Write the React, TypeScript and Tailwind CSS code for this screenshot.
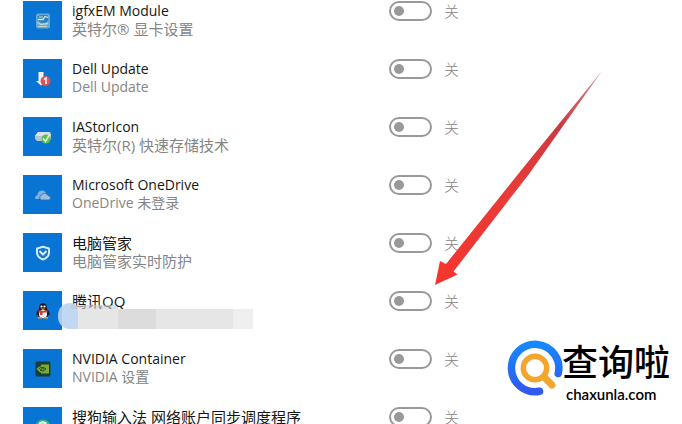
import { useState } from 'react'
import type { ReactNode } from 'react'
import { clsx } from 'clsx'

interface StartupApp {
  id: string
  name: string
  detail: string
  icon: ReactNode
  masked?: boolean
}

function GraphicsIcon() {
  return (
    <svg viewBox="0 0 16 16" className="size-4" aria-hidden="true">
      <rect x="1" y="0.5" width="14" height="15" rx="2" fill="#62abd8" />
      <path d="M2.5 3.5 6 2h6.500l1 5-2.500 2.500L7 10 3 8z" fill="#2c80c0" />
      <path d="M3 6.500h5l2-3 3 1" stroke="#d6e6e4" strokeWidth="1.300" fill="none" />
      <path d="M4 4h4" stroke="#d9c98c" strokeWidth="1.200" />
      <path d="M2.500 9.500 6 11.500l7-1" stroke="#b7d7e2" strokeWidth="1.300" fill="none" />
      <path d="M3 13.500h9" stroke="#c8d6c0" strokeWidth="1" />
    </svg>
  )
}

function DellIcon() {
  return (
    <svg viewBox="0 0 16 16" className="size-4" aria-hidden="true">
      <path d="M3.500 1h5v9h2L6 14.500 1 10h2.500z" fill="#f3f5fa" />
      <circle cx="10.500" cy="10" r="5" fill="#dc5454" />
      <path d="m9 8.500 2-1.500v6" stroke="#fff" strokeWidth="1.500" fill="none" />
    </svg>
  )
}

function StorageIcon() {
  return (
    <svg viewBox="0 0 16 16" className="size-4" aria-hidden="true">
      <path d="M3 3h12l1 2v5l-2 2H2l-2-2V7z" fill="#b9c4cf" />
      <path d="M3 3h12l-2 4H0z" fill="#dce2e8" />
      <circle cx="11" cy="10" r="4.500" fill="#58bd58" />
      <path d="m8 9.500 2.500 3L15 5" stroke="#d5f6bd" strokeWidth="1.700" fill="none" />
    </svg>
  )
}

function CloudIcon() {
  return (
    <svg viewBox="0 0 16 16" className="size-4" aria-hidden="true">
      <path d="M0 11a3 3 0 0 1 2.500-3A4.500 4.500 0 0 1 11 6L6 8l-2 4H1z" fill="#7fb0df" />
      <path
        d="M6.500 13a2.500 2.500 0 0 1-.5-4.500 4 4 0 0 1 7.200.2 2.200 2.200 0 0 1 .8 4.300z"
        fill="#9dbcd8"
        stroke="#1873cd"
        strokeWidth="0.800"
      />
    </svg>
  )
}

function ShieldIcon() {
  return (
    <svg viewBox="0 0 16 16" className="size-4" aria-hidden="true">
      <path
        d="M8 1.800 14 3.500v4c0 3.200-2.500 5.700-6 7-3.500-1.300-6-3.800-6-7v-4z"
        fill="#1674cf"
        stroke="#d3ebff"
        strokeWidth="2"
        strokeLinejoin="round"
      />
      <path d="m4.500 6 3.500 3.500L11.500 6" fill="none" stroke="#d3ebff" strokeWidth="2" />
    </svg>
  )
}

function PenguinIcon() {
  return (
    <svg viewBox="0 0 16 16" className="size-4" aria-hidden="true">
      <path d="M4 6C4 2 5.500.3 8 .3S12 2 12 6c2 2 3 4 2.500 6.500L13 12l-1 3H4l-1-3-1.500.5C1 10 2 8 4 6z" fill="#1c1b24" />
      <ellipse cx="8" cy="11" rx="4" ry="4" fill="#f6f4f0" />
      <circle cx="6.500" cy="3.500" r="1.100" fill="#fff" />
      <circle cx="9.500" cy="3.500" r="1.100" fill="#fff" />
      <path d="M5.500 5.500h5L8 7z" fill="#f0b33c" />
      <path d="M3.500 7q4.500 2 9 0v2q-3 1-5 .8v2.200H5V9.400L3.500 9z" fill="#d83a38" />
      <path d="M3 15q1.500-1.500 4 0zM9 15q2.500-1.500 4 0z" fill="#e9a23a" stroke="#e9a23a" />
    </svg>
  )
}

function NvidiaIcon() {
  return (
    <svg viewBox="0 0 16 16" className="size-4" aria-hidden="true">
      <rect x="0.500" y="0.500" width="15" height="15" rx="1.500" fill="#183e3b" />
      <path d="M6 3.500h8v9H6z" fill="#7dab2b" />
      <path d="M1.500 8q3.500-5 8-2L13 8q-5 5.500-8.500 3z" fill="#7dab2b" />
      <path d="M3.500 8Q7 4.500 11 8q-3 3.500-6 1.200Q7.500 6.500 9 8" fill="none" stroke="#183e3b" strokeWidth="0.900" />
    </svg>
  )
}

function SogouIcon() {
  return (
    <svg viewBox="0 0 16 16" className="size-4" aria-hidden="true">
      <circle cx="8" cy="8" r="7.500" fill="#35b77a" />
      <path d="M11.500 4.500Q5 2 4.500 5.500T11 9t-6.500 2.500" fill="none" stroke="#e5fff0" strokeWidth="2.200" />
    </svg>
  )
}

const apps: StartupApp[] = [
  { id: 'igfx', name: 'igfxEM Module', detail: '英特尔® 显卡设置', icon: <GraphicsIcon /> },
  { id: 'dell', name: 'Dell Update', detail: 'Dell Update', icon: <DellIcon /> },
  { id: 'iastor', name: 'IAStorIcon', detail: '英特尔(R) 快速存储技术', icon: <StorageIcon /> },
  { id: 'onedrive', name: 'Microsoft OneDrive', detail: 'OneDrive 未登录', icon: <CloudIcon /> },
  { id: 'manager', name: '电脑管家', detail: '电脑管家实时防护', icon: <ShieldIcon /> },
  { id: 'qq', name: '腾讯QQ', detail: '', icon: <PenguinIcon />, masked: true },
  { id: 'nvidia', name: 'NVIDIA Container', detail: 'NVIDIA 设置', icon: <NvidiaIcon /> },
  { id: 'sogou', name: '搜狗输入法 网络账户同步调度程序', detail: '', icon: <SogouIcon /> },
]

// Chinese lines are set one size up from Latin ones
function getTextSize(text: string) {
  return /^[\u4e00-\u9fff]/.test(text) ? 'text-[15px]' : 'text-[14px]'
}

// Covers the publisher line
function Mask() {
  return (
    <div className="absolute top-3 left-[35px] flex h-[26px] items-end" aria-hidden="true">
      <div className="h-[26px] w-5 rounded-l-xl rounded-tr-lg bg-[#b9d4ef]/90" />
      <div className="h-5 w-10 bg-[#e6e6e7]" />
      <div className="h-5 w-[38px] bg-[#dcdcdd]" />
      <div className="h-5 w-[77px] bg-[#e6e6e6]" />
      <div className="h-5 w-5 bg-[#efefef]" />
      <div className="absolute top-[2px] left-3 h-1 w-12 rounded-tr-full bg-[#c8ccd0]/60" />
    </div>
  )
}

function AppRow({ app }: { app: StartupApp }) {
  const [enabled, setEnabled] = useState(false)

  return (
    <li className="relative flex h-[39px] items-start">
      <div className="flex size-[39px] shrink-0 items-center justify-center bg-[#0874d4]">
        {app.icon}
      </div>
      <div className="ml-[10px] w-[317px] shrink-0 pt-px whitespace-nowrap">
        <label htmlFor={app.id} className={clsx('block leading-[18px] text-[#161616]', getTextSize(app.name))}>
          {app.name}
        </label>
        <p className={clsx('leading-[18px] text-[#858585]', getTextSize(app.detail))}>{app.detail}</p>
      </div>
      {app.masked && <Mask />}
      <input
        id={app.id}
        type="checkbox"
        role="switch"
        checked={enabled}
        onChange={(e) => setEnabled(e.target.checked)}
        className="h-5 w-[43px] shrink-0 appearance-none rounded-full border-2 border-[#999999] before:mt-[3px] before:ml-[3px] before:block before:size-[10px] before:rounded-full before:bg-[#999999] checked:before:ml-[26px]"
      />
      <span className="ml-3 text-[15px] leading-5 font-light text-[#858585]">{enabled ? '开' : '关'}</span>
    </li>
  )
}

function Arrow() {
  return (
    <svg viewBox="0 0 168 216" className="pointer-events-none absolute top-[70px] left-[435px] h-[216px] w-[168px]" aria-hidden="true">
      <defs>
        <linearGradient id="arrow-fill" x1="0" y1="1" x2="1" y2="0">
          <stop offset="0" stopColor="#f6352f" />
          <stop offset="0.500" stopColor="#e63b38" />
          <stop offset="0.750" stopColor="#c83a43" />
          <stop offset="1" stopColor="#d98b90" />
        </linearGradient>
      </defs>
      <path d="M0 215 5 191l6 3L88 98 167 1 94 104 18.500 201.500l4 3z" fill="url(#arrow-fill)" />
    </svg>
  )
}

function Watermark() {
  return (
    <div className="absolute right-3 bottom-[22px] flex items-start text-black">
      <svg viewBox="0 0 56 56" className="size-14" aria-hidden="true">
        <defs>
          <linearGradient id="ring-fill" x1="0" y1="0" x2="0" y2="1">
            <stop offset="0" stopColor="#1688ff" />
            <stop offset="1" stopColor="#3159ee" />
          </linearGradient>
        </defs>
        <path d="M32.500 51.300A23.700 23.700 0 1 1 51.200 33.500" fill="none" stroke="url(#ring-fill)" strokeWidth="7.500" strokeLinecap="round" />
        <path d="m36 36 9 9" stroke="#f4a52f" strokeWidth="7" strokeLinecap="round" />
        <circle cx="28" cy="28" r="11.700" fill="#fff" stroke="#f4a52f" strokeWidth="5.500" />
      </svg>
      <div className="-ml-px flex flex-col items-start whitespace-nowrap">
        <span className="text-[36px] leading-[46px] font-medium">查询啦</span>
        <a href="#" className="ml-1 font-['Lato','Open_Sans',sans-serif] text-[15px] leading-4 font-semibold">chaxunla.com</a>
      </div>
    </div>
  )
}

export default function App() {
  return (
    <main className="relative h-screen overflow-hidden bg-white font-['Open_Sans','Noto_Sans_CJK_SC',sans-serif]">
      <ul className="flex flex-col gap-[19px] pt-px pl-[23px]">
        {apps.map((app) => (
          <AppRow key={app.id} app={app} />
        ))}
      </ul>
      <Arrow />
      <Watermark />
    </main>
  )
}
